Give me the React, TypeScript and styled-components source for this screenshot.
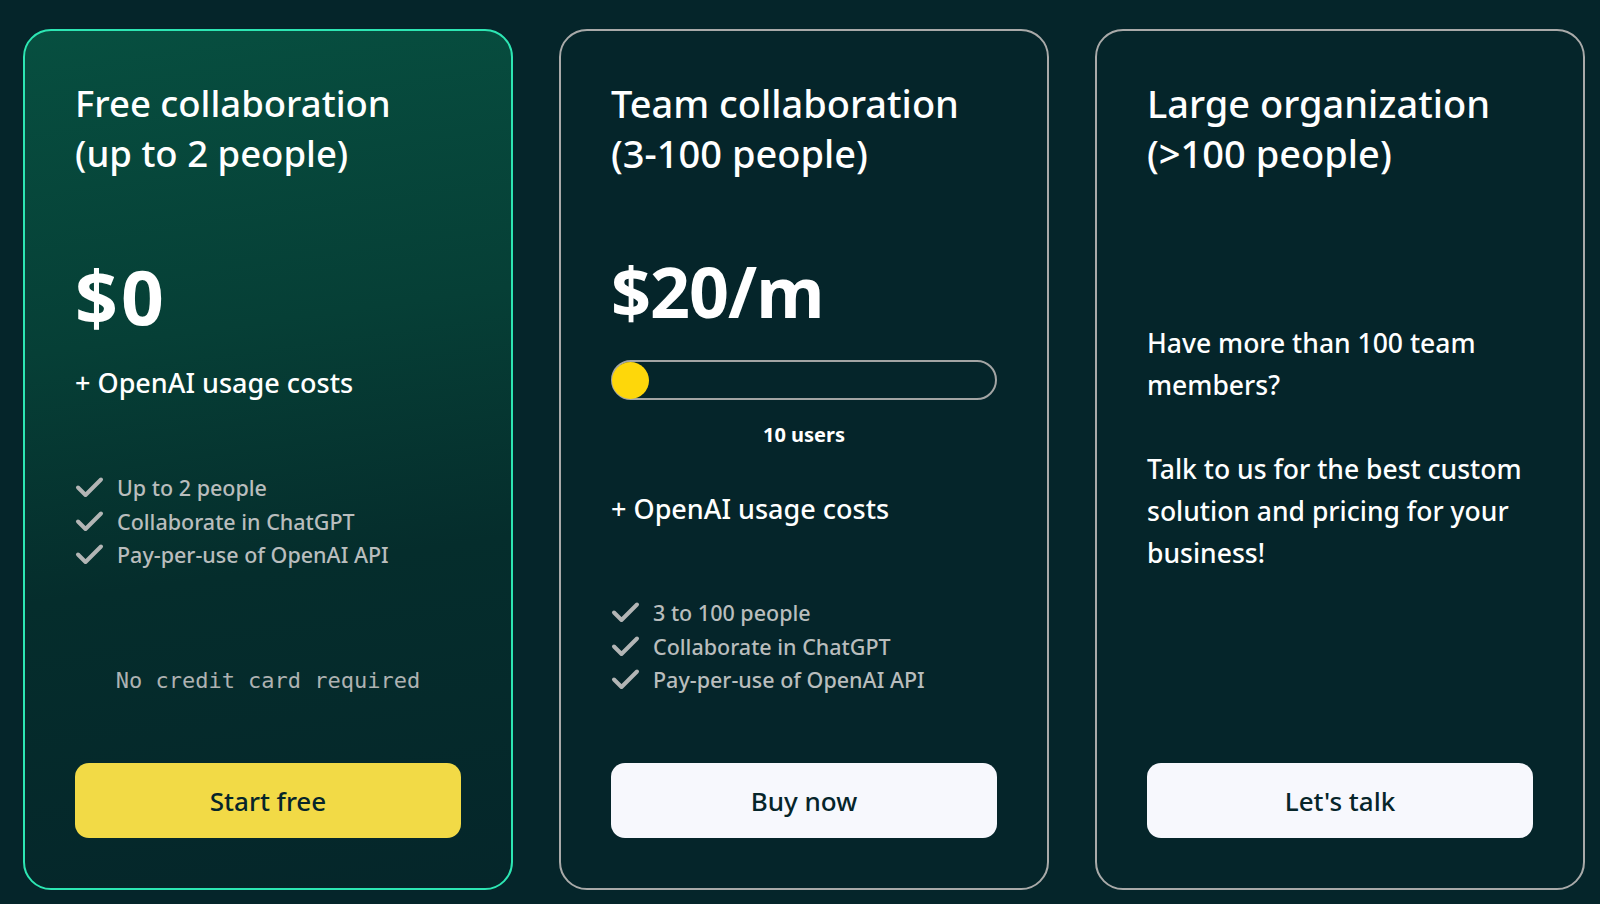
import React from 'react'
import styled, { createGlobalStyle } from 'styled-components'

const GlobalStyle = createGlobalStyle`
  html, body {
    margin: 0;
    padding: 0;
    background: #05252a;
  }
  body {
    font-family: "Noto Sans", sans-serif;
    color: #fff;
  }
`

const Page = styled.div`
  display: grid;
  grid-template-columns: repeat(3, 490px);
  column-gap: 46px;
  padding: 29px 15px 14px 23px;
  height: 904px;
  box-sizing: border-box;
`

const Card = styled.div<{ $featured?: boolean }>`
  display: flex;
  flex-direction: column;
  box-sizing: border-box;
  height: 861px;
  padding: 47px 50px 50px 50px;
  border-radius: 28px;
  border: 2px solid ${p => (p.$featured ? '#2de6b3' : '#a9aaa9')};
  background: ${p =>
    p.$featured
      ? 'linear-gradient(172deg, #074f40 0%, #063f36 35%, #052d2c 62%, #05262a 100%)'
      : '#05252a'};
`

const Title = styled.h2<{ $size?: number }>`
  margin: 0;
  font-family: "Noto Sans", sans-serif;
  font-weight: 500;
  font-size: ${p => p.$size ?? 38}px;
  line-height: 50px;
`

const Price = styled.div<{ $top: number; $size?: number; $spread?: number }>`
  margin-top: ${p => p.$top}px;
  font-family: "Noto Sans", sans-serif;
  font-weight: 700;
  font-size: ${p => p.$size ?? 70}px;
  line-height: 86px;
  letter-spacing: ${p => p.$spread ?? -1}px;
`

const Usage = styled.div<{ $top: number }>`
  margin-top: ${p => p.$top}px;
  font-size: 27px;
  font-weight: 500;
  line-height: 36px;
`

const Features = styled.ul<{ $top: number }>`
  margin: ${p => p.$top}px 0 0 0;
  padding: 0;
  list-style: none;
  display: flex;
  flex-direction: column;
`

const Feature = styled.li`
  display: flex;
  align-items: center;
  gap: 13px;
  height: 33.5px;
  font-size: 21.5px;
  font-weight: 500;
  color: #b9bdbd;
`

const Note = styled.div`
  margin-top: 94px;
  text-align: center;
  font-family: "DejaVu Sans Mono", monospace;
  font-size: 22px;
  line-height: 30px;
  color: #aeb2b2;
`

const Slider = styled.div`
  margin-top: 26px;
  display: flex;
  align-items: center;
  height: 40px;
  box-sizing: border-box;
  border: 2px solid #a3a5a4;
  border-radius: 20px;
`

const Knob = styled.div`
  width: 37px;
  height: 37px;
  margin-left: -1px;
  border-radius: 50%;
  background: #fed70a;
`

const Users = styled.div`
  margin-top: 22px;
  text-align: center;
  font-weight: 700;
  font-size: 20px;
  line-height: 26px;
`

const Blurb = styled.p`
  margin: 144px 0 0 0;
  font-size: 26.5px;
  font-weight: 500;
  line-height: 42px;
`

const Button = styled.button<{ $primary?: boolean }>`
  margin-top: auto;
  height: 75px;
  width: 100%;
  border: none;
  border-radius: 14px;
  background: ${p => (p.$primary ? '#f2da46' : '#f7f8fd')};
  color: #06252a;
  font-family: "Noto Sans", sans-serif;
  font-size: 26px;
  font-weight: 500;
  cursor: pointer;
`

const Check = () => (
  <svg width="29" height="23" viewBox="0 0 29 23" fill="none">
    <polyline
      points="3,11.5 10.5,19 26,3.5"
      stroke="#b3b5b5"
      strokeWidth="4"
      strokeLinecap="round"
      strokeLinejoin="round"
    />
  </svg>
)

const FeatureList = ({ items, top }: { items: string[]; top: number }) => (
  <Features $top={top}>
    {items.map(item => (
      <Feature key={item}>
        <Check />
        {item}
      </Feature>
    ))}
  </Features>
)

export default function App() {
  return (
    <>
      <GlobalStyle />
      <Page>
        <Card $featured>
          <Title $size={36.5}>
            Free collaboration
            <br />
            (up to 2 people)
          </Title>
          <Price $top={75} $size={75} $spread={3}>$0</Price>
          <Usage $top={26}>+ OpenAI usage costs</Usage>
          <FeatureList top={70} items={['Up to 2 people', 'Collaborate in ChatGPT', 'Pay-per-use of OpenAI API']} />
          <Note>No credit card required</Note>
          <Button $primary>Start free</Button>
        </Card>

        <Card>
          <Title>
            Team collaboration
            <br />
            (3-100 people)
          </Title>
          <Price $top={70}>$20/m</Price>
          <Slider>
            <Knob />
          </Slider>
          <Users>10 users</Users>
          <Usage $top={43}>+ OpenAI usage costs</Usage>
          <FeatureList top={69} items={['3 to 100 people', 'Collaborate in ChatGPT', 'Pay-per-use of OpenAI API']} />
          <Button>Buy now</Button>
        </Card>

        <Card>
          <Title>
            Large organization
            <br />
            (&gt;100 people)
          </Title>
          <Blurb>
            Have more than 100 team members?
            <br />
            <br />
            Talk to us for the best custom solution and pricing for your business!
          </Blurb>
          <Button>Let's talk</Button>
        </Card>
      </Page>
    </>
  )
}
